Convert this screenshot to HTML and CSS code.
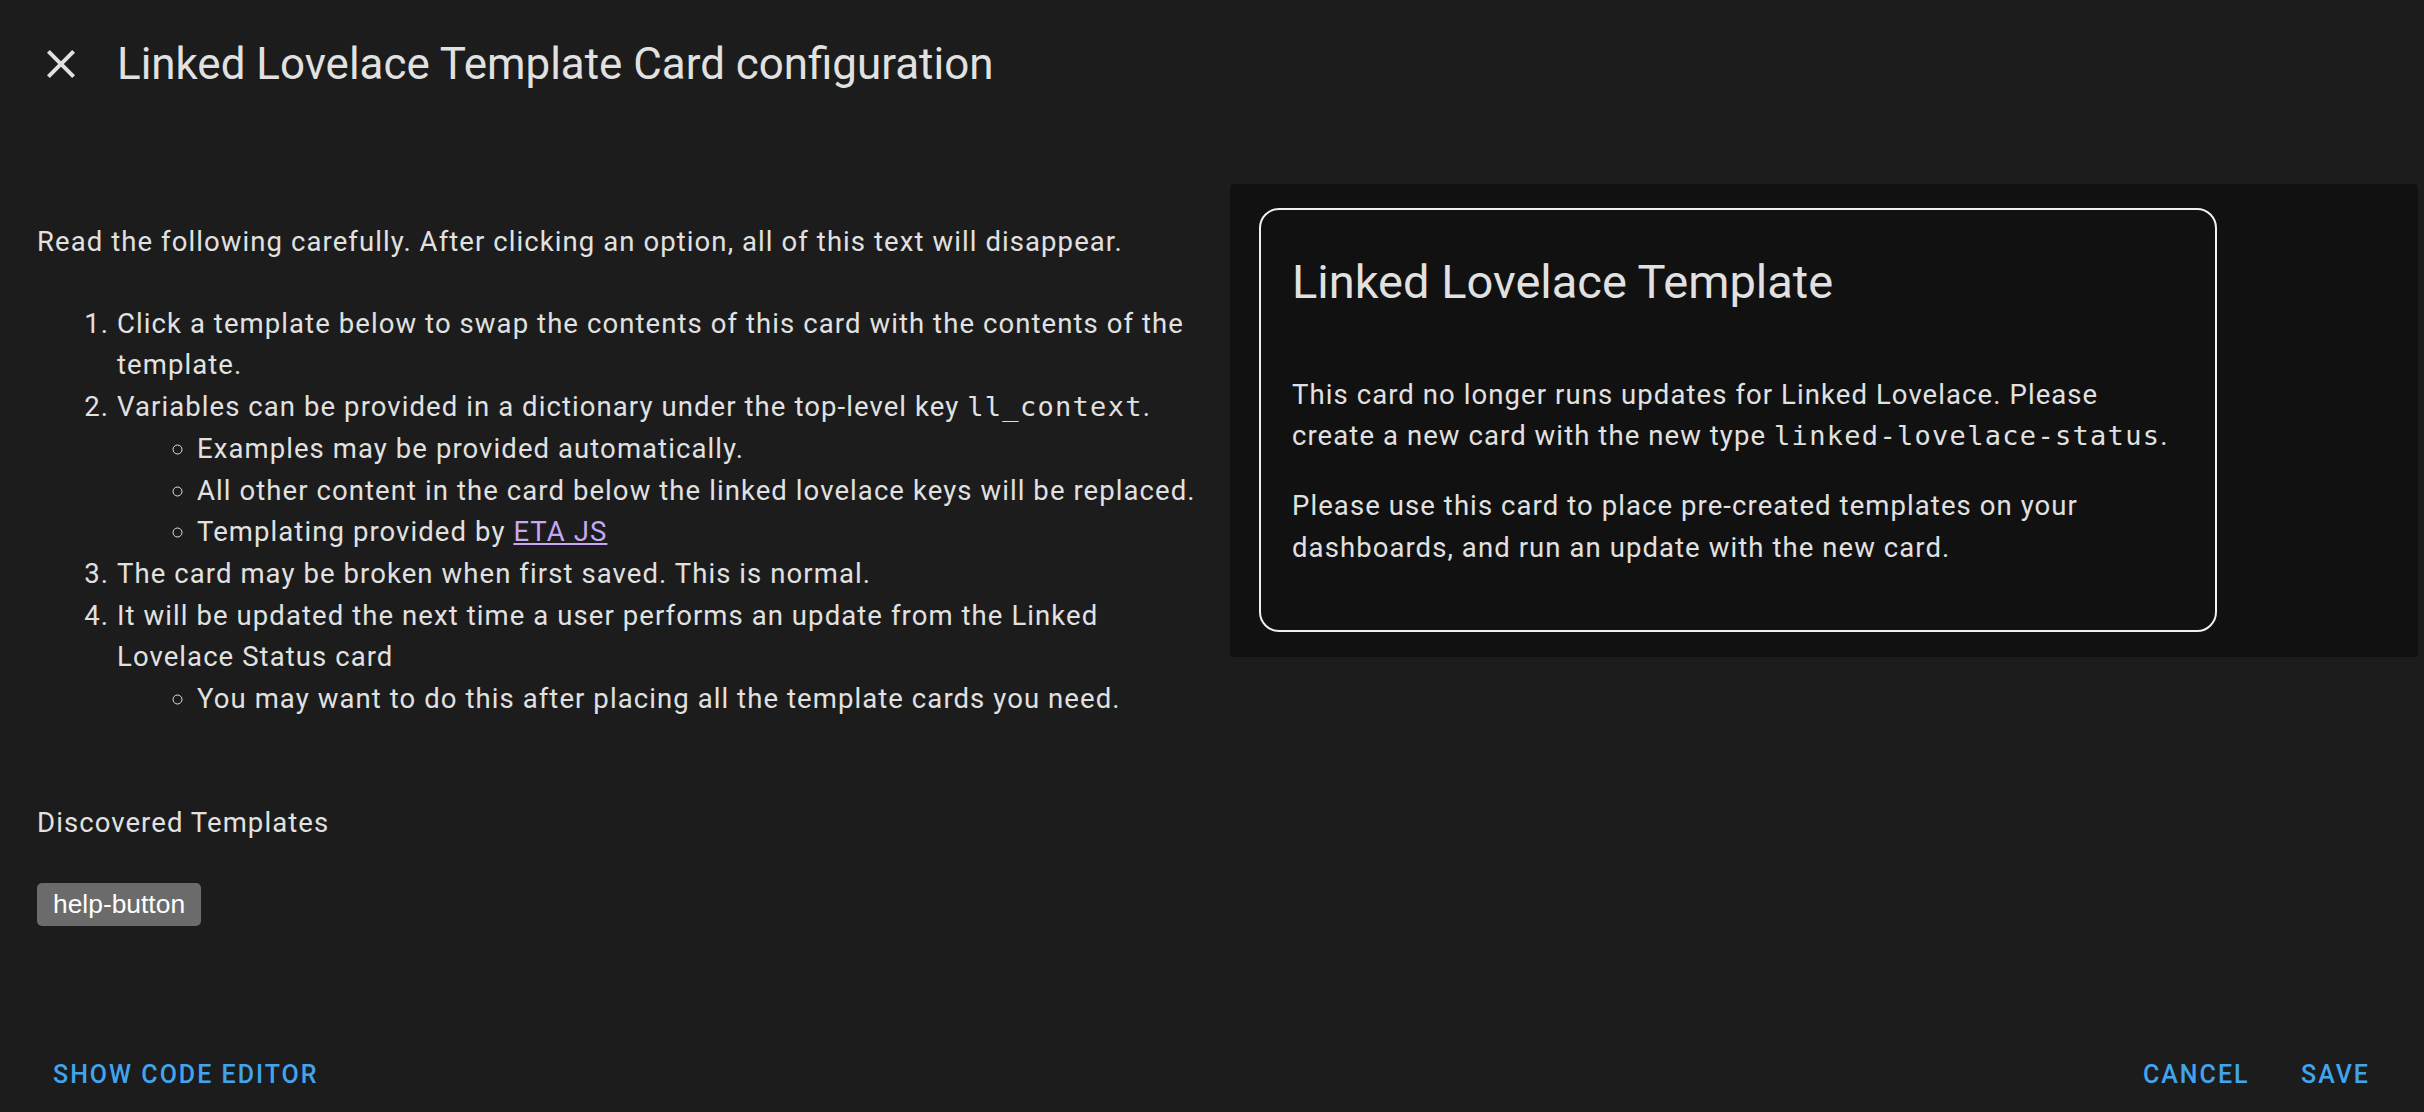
FILE: index.html
```html
<!DOCTYPE html>
<html lang="en">
<head>
  <meta charset="UTF-8">
  <meta name="viewport" content="width=device-width, initial-scale=1.0">
  <title>Linked Lovelace Template Card configuration</title>
  <link rel="stylesheet" href="styles.css">
</head>
<body>
  <header class="dialog-header">
    <button class="close-button" aria-label="Close">
      <svg viewBox="0 0 24 24" width="48" height="48"><path fill="currentColor" d="M19,6.41L17.59,5L12,10.59L6.41,5L5,6.41L10.59,12L5,17.59L6.41,19L12,13.41L17.59,19L19,17.59L13.41,12L19,6.41Z"/></svg>
    </button>
    <h1 class="dialog-title">Linked Lovelace Template Card configuration</h1>
  </header>

  <main class="dialog-content">
    <section class="editor">
      <p class="intro">Read the following carefully. After clicking an option, all of this text will disappear.</p>
      <ol class="steps">
        <li>Click a template below to swap the contents of this card with the contents of the template.</li>
        <li>Variables can be provided in a dictionary under the top-level key <code>ll_context</code>.
          <ul>
            <li>Examples may be provided automatically.</li>
            <li>All other content in the card below the linked lovelace keys will be replaced.</li>
            <li>Templating provided by <a href="#">ETA JS</a></li>
          </ul>
        </li>
        <li>The card may be broken when first saved. This is normal.</li>
        <li>It will be updated the next time a user performs an update from the Linked Lovelace Status card
          <ul>
            <li>You may want to do this after placing all the template cards you need.</li>
          </ul>
        </li>
      </ol>
      <p class="section-label">Discovered Templates</p>
      <button class="template-chip">help-button</button>
    </section>

    <section class="preview">
      <div class="card">
        <h2 class="card-title">Linked Lovelace Template</h2>
        <div class="card-body">
          <p>This card no longer runs updates for Linked Lovelace. Please create a new card with the new type <code>linked-lovelace-status</code>.</p>
          <p>Please use this card to place pre-created templates on your dashboards, and run an update with the new card.</p>
        </div>
      </div>
    </section>
  </main>

  <footer class="dialog-actions">
    <button class="text-button">Show code editor</button>
    <div class="action-group">
      <button class="text-button">Cancel</button>
      <button class="text-button">Save</button>
    </div>
  </footer>
</body>
</html>
```

FILE: styles.css
```css
* {
  box-sizing: border-box;
}
body {
  margin: 0;
  height: 100vh;
  overflow: hidden;
  display: flex;
  flex-direction: column;
  background-color: #1c1c1c;
  color: #e1e1e1;
  font-family: Roboto, 'Noto Sans', sans-serif;
  font-size: 27.5px;
  line-height: 41.7px;
  letter-spacing: 1.08px;
}
code {
  font-family: 'DejaVu Sans Mono', monospace;
  font-size: 27px;
  letter-spacing: 1.3px;
}
a {
  color: #c6a8f2;
}

.dialog-header {
  display: flex;
  align-items: center;
  gap: 32px;
  padding: 32px 0 0 37px;
  height: 96px;
}
.close-button {
  display: flex;
  padding: 0;
  border: none;
  background: none;
  color: #e1e1e1;
  cursor: pointer;
}
.dialog-title {
  margin: 0;
  font-size: 43.9px;
  line-height: 64px;
  font-weight: 400;
  letter-spacing: 0;
}

.dialog-content {
  flex: 1;
  display: grid;
  grid-template-columns: 1fr 1188px;
  column-gap: 18px;
  align-items: start;
  padding: 88px 6px 0 37px;
}
.editor {
  padding-top: 37px;
}
.intro {
  margin: 0 0 40px;
}
.steps {
  margin: 0 0 82px;
  padding-left: 80px;
}
.steps ul {
  margin: 0;
  padding-left: 80px;
  list-style-type: circle;
}
.section-label {
  margin: 0 0 40px;
}
.template-chip {
  height: 43px;
  padding: 0 16px;
  border: none;
  border-radius: 5px;
  background-color: #6b6b6b;
  color: #fff;
  font-family: 'Liberation Sans', Arial, sans-serif;
  font-size: 26.4px;
  cursor: pointer;
}

.preview {
  background-color: #111;
  border-radius: 4px;
  padding: 24px 0 25px 29px;
}
.card {
  width: 958px;
  border: 2px solid #f0f0f0;
  border-radius: 20px;
  padding: 34.5px 31px 34px;
  background-color: #111;
}
.card-title {
  margin: 0 0 55px;
  font-size: 47px;
  line-height: 74px;
  font-weight: 400;
  letter-spacing: 0;
}
.card-body p {
  margin: 0 0 28px;
}

.dialog-actions {
  display: flex;
  justify-content: space-between;
  padding: 0 39px 10px 38px;
}
.action-group {
  display: flex;
  gap: 21.5px;
}
.text-button {
  height: 56px;
  padding: 0 15px;
  border: none;
  background: none;
  color: #41a5ee;
  font-family: Roboto, sans-serif;
  font-size: 25px;
  font-weight: 500;
  letter-spacing: 2px;
  text-transform: uppercase;
  cursor: pointer;
}
```
